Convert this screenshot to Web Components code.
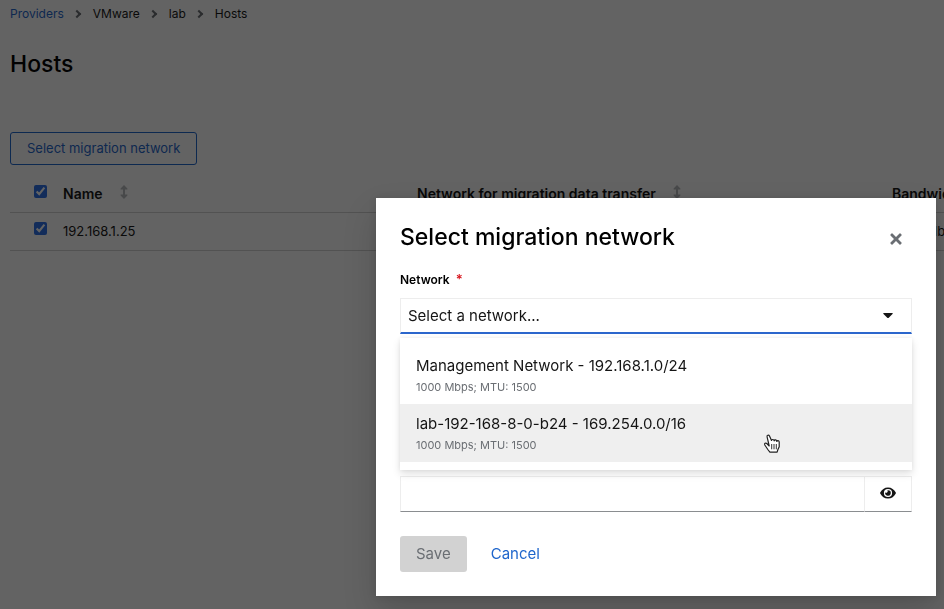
<!DOCTYPE html>
<html lang="en">
<head>
<meta charset="utf-8">
<title>Hosts</title>
<style>
  html, body { height: 100%; }
  body {
    margin: 0;
    overflow: hidden;
    background: #fff;
    color: #151515;
    font-family: Inter, "Open Sans", sans-serif;
    --link: #1f66cc;
    --active: #2b66cc;
    --muted: #6a6e73;
    --line: #d2d2d2;
  }
</style>
</head>
<body>
<hosts-page>
  <crumb-trail slot="nav"></crumb-trail>
  <hosts-table></hosts-table>
</hosts-page>
<modal-box heading="Select migration network">
  <network-form></network-form>
</modal-box>

<script>
const define = (name, html, setup) => {
  const template = document.createElement('template');
  template.innerHTML = '<style>*{box-sizing:border-box}button,input,select{font-family:inherit;margin:0}svg{display:block;fill:currentColor}</style>' + html;
  customElements.define(name, class extends HTMLElement {
    constructor() {
      super();
      this.attachShadow({ mode: 'open' }).append(template.content.cloneNode(true));
      if (setup) setup(this, this.shadowRoot);
    }
  });
};

define('crumb-trail', `
<style>
  :host { display: block; font-size: 12px; line-height: 18px; }
  ol { display: flex; align-items: center; margin: 0; padding: 0; list-style: none; }
  li { display: flex; align-items: center; }
  li + li::before {
    content: ""; width: 6px; height: 6px; margin: 0 13px 0 10px;
    border: solid #6a6e73; border-width: 2px 2px 0 0; transform: rotate(45deg);
    box-sizing: border-box;
  }
  a { color: var(--link); text-decoration: none; }
</style>
<nav aria-label="Breadcrumb"><ol>
  <li><a href="#providers">Providers</a></li>
  <li>VMware</li>
  <li>lab</li>
  <li aria-current="page">Hosts</li>
</ol></nav>`);

define('hosts-page', `
<style>
  :host { display: block; padding: 5px 0 0 10px; }
  h1 { margin: 25px 0 52px; font-size: 23px; line-height: 32px; font-weight: 500; color: #000; }
  .action {
    display: block; height: 33px; margin-bottom: 8px; padding: 0 16px 2px; border: 1px solid var(--link);
    border-radius: 3px; background: none; color: var(--link); font-size: 13px;
  }
</style>
<slot name="nav"></slot>
<main>
  <h1>Hosts</h1>
  <button class="action" type="button">Select migration network</button>
  <slot></slot>
</main>`);

define('sort-icon', `
<style>
  :host { display: inline-block; width: 8px; height: 14px; margin-left: 14px; color: #b8bbbe; }
  svg { width: 8px; height: 14px; }
</style>
<svg viewBox="0 0 8 14" aria-hidden="true"><path d="M4 0 7.400 3.600V4.400H5v5.200h2.400v.8L4 14 .6 10.400v-.8H3V4.400H.6v-.8z"/></svg>`);

define('hosts-table', `
<style>
  :host { display: block; overflow: hidden; }
  table { width: 1100px; table-layout: fixed; border-collapse: collapse; }
  th, td { text-align: left; vertical-align: top; white-space: nowrap; line-height: 18px; }
  td { padding: 9px 0 10px; font-size: 13px; }
  th, thead td { padding: 12px 0 9px; font-size: 14px; font-weight: 600; }
  tr { border-bottom: 1px solid var(--line); }
  sort-icon { vertical-align: top; }
  .pick { padding-left: 24px; }
  input { display: block; width: 13px; height: 13px; accent-color: #2b70e8; }
  .check { width: 53px; } .name { width: 354px; } .net { width: 475px; }
</style>
<table>
  <colgroup><col class="check"><col class="name"><col class="net"><col></colgroup>
  <thead><tr>
    <th class="pick" style="padding-left:24px"><input type="checkbox" checked aria-label="Select all hosts"></th>
    <th scope="col">Name <sort-icon></sort-icon></th>
    <th scope="col">Network for migration data transfer <sort-icon></sort-icon></th>
    <th scope="col">Bandwidth</th>
  </tr></thead>
  <tbody><tr>
    <td class="pick"><input type="checkbox" checked aria-label="Select host 192.168.1.25"></td>
    <td>192.168.1.25</td>
    <td></td>
    <td>1000 Mbps</td>
  </tr></tbody>
</table>`);

define('modal-box', `
<style>
  :host {
    position: fixed; inset: 0; display: flex; align-items: flex-end; justify-content: flex-end;
    padding: 8px 8px 13px; background: rgba(3, 3, 3, .62);
  }
  section {
    width: 100%; max-width: 560px; padding: 24px; background: #fff;
    box-shadow: 0 16px 32px rgba(3, 3, 3, .16), 0 0 8px rgba(3, 3, 3, .1);
  }
  header { display: flex; align-items: flex-end; justify-content: space-between; margin-bottom: 16px; }
  h2 { margin: 0; font-size: 23px; line-height: 31px; font-weight: 500; color: #000; }
  button { padding: 8px 10px; border: 0; background: none; color: var(--muted); }
  svg { width: 12px; height: 12px; }
</style>
<section role="dialog" aria-modal="true" aria-labelledby="heading">
  <header>
    <h2 id="heading"></h2>
    <button type="button" aria-label="Close"><svg viewBox="0 0 12 12"><path d="M2.500.5 6 4 9.500.5q.5-.4 1 0l1 1q.4.5 0 1L8 6l3.500 3.500q.4.5 0 1l-1 1q-.5.4-1 0L6 8l-3.500 3.500q-.5.4-1 0l-1-1q-.4-.5 0-1L4 6 .5 2.500q-.4-.5 0-1l1-1q.5-.4 1 0z"/></svg></button>
  </header>
  <slot></slot>
</section>`, (host, root) => {
  root.querySelector('h2').textContent = host.getAttribute('heading') || 'Select migration network';
});

define('network-option', `
<style>
  :host { display: block; padding: 8px 16px; cursor: pointer; }
  :host([active]) { background: #efefef; }
  .title { font-size: 15px; line-height: 24px; }
  .note { font-size: 11px; line-height: 18px; color: var(--muted); }
</style>
<div class="title"><slot></slot></div>
<div class="note"><slot name="note"></slot></div>`);

define('network-form', `
<style>
  :host { display: block; }
  form { display: grid; gap: 24px; }
  label { display: block; margin-bottom: 8px; font-size: 12px; line-height: 21px; font-weight: 600; color: #000; }
  .required { margin-left: 3px; color: #d8131c; font-size: 13px; }
  .covered { padding-top: 29px; }
  .control { position: relative; display: flex; align-items: center; }
  select, input {
    display: block; width: 100%; height: 36px; padding: 0 8px; border: 1px solid #ededed;
    border-bottom-color: #8a8d90; border-radius: 0; outline: 0; background: #fff; color: #151515;
    font-size: 15px;
  }
  select { appearance: none; padding: 0 7px; border-bottom: 2px solid var(--active); }
  .caret { position: absolute; right: 19px; width: 10px; height: 6px; pointer-events: none; }
  .menu {
    position: absolute; z-index: 1; top: 100%; left: 0; right: 0; margin-top: 4px; padding: 8px 0;
    background: #fff; box-shadow: 0 4px 8px rgba(3, 3, 3, .12), 0 0 4px rgba(3, 3, 3, .06);
  }
  .pointer { position: absolute; right: 131px; bottom: 16px; width: 18px; height: 20px; pointer-events: none; }
  .reveal {
    display: grid; place-items: center; flex: 0 0 47px; height: 36px; padding: 0 0 2px;
    border: 1px solid #ededed; border-bottom-color: #8a8d90; border-left: 0; background: #fff; color: #151515;
  }
  .reveal svg { width: 16px; height: 12px; }
  .actions { display: flex; gap: 8px; }
  .actions button { height: 36px; padding: 0 16px 2px; border: 0; border-radius: 3px; font-size: 15px; }
  .save { background: var(--line); color: var(--muted); }
  .cancel { background: none; color: var(--link); }
</style>
<form>
  <div>
    <label for="network">Network <span class="required" aria-hidden="true">*</span></label>
    <div class="control">
      <select id="network" required><option>Select a network...</option></select>
      <svg class="caret" viewBox="0 0 10 6" aria-hidden="true"><path d="M1 0h8q1.400 0 .5 1L6 4.600Q5 5.600 4 4.600L.5 1Q-.4 0 1 0z"/></svg>
      <div class="menu" role="listbox" aria-label="Network">
        <network-option role="option">Management Network - 192.168.1.0/24<span slot="note">1000 Mbps; MTU: 1500</span></network-option>
        <network-option role="option" active>lab-192-168-8-0-b24 - 169.254.0.0/16<span slot="note">1000 Mbps; MTU: 1500</span></network-option>
        <svg class="pointer" viewBox="0 0 18 20" aria-hidden="true">
          <path d="M6.200 12 3.800 9.500C2.600 8.500 1 9.500 1.800 11l3.400 5 1.700 2.200h7.200l.7-2.400 1.400-3V8.100c0-1.700-2.100-1.900-2.400-.6 0-1.900-2.200-2.100-2.600-.7-.3-1.700-2.500-1.600-2.700-.3L6.500 2C5.700.6 3.600 1.200 4.100 2.900z" fill="#fff" stroke="#222" stroke-width="1.200" stroke-linejoin="round"/>
          <path d="M8.700 10v5.300M11 10v5.300M13.300 10v5.300" fill="none" stroke="#333" stroke-width="1"/>
        </svg>
      </div>
    </div>
  </div>
  <div class="covered"><input type="text" aria-label="Host admin username"></div>
  <div class="covered"><div class="control">
    <input type="password" aria-label="Host admin password">
    <button class="reveal" type="button" aria-label="Show password"><svg viewBox="0 0 16 12"><path fill-rule="evenodd" d="M8 .4c3.600 0 6.200 2 7.800 5.100q.2.500 0 1C14.200 9.600 11.600 11.600 8 11.600S1.800 9.600.2 6.500q-.2-.5 0-1C1.800 2.400 4.400.4 8 .4zM8 1.900a4.100 4.100 0 1 0 0 8.200 4.100 4.100 0 0 0 0-8.200zM8 3.200a2.800 2.800 0 1 1-2.700 2.100A1.400 1.400 0 0 0 7.300 3.300Q7.600 3.200 8 3.200z"/></svg></button>
  </div></div>
  <div class="actions">
    <button class="save" type="submit" disabled>Save</button>
    <button class="cancel" type="button">Cancel</button>
  </div>
</form>`);
</script>
</body>
</html>
